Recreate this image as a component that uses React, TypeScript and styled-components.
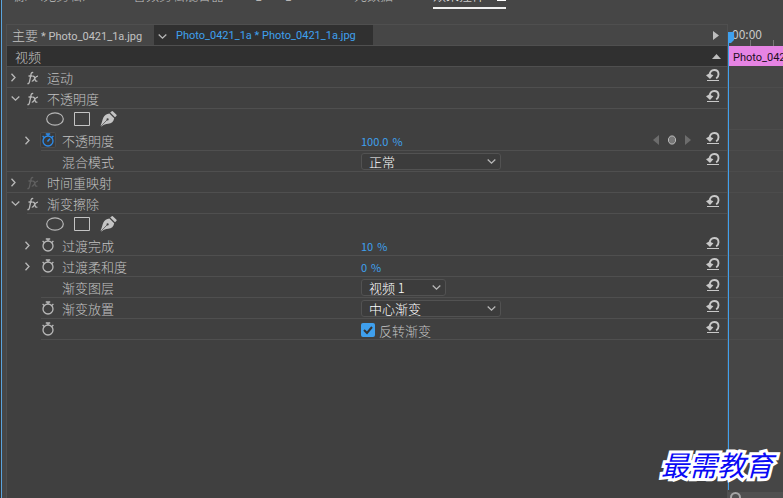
import React from "react";
import styled, { createGlobalStyle, css } from "styled-components";

const c = {
  frame: "#464646",
  panel: "#404040",
  dark: "#303030",
  line: "#4f4f4f",
  text: "#c2c2c2",
  icon: "#b8b8b8",
  blue: "#3fa0ee",
};

const GlobalStyle = createGlobalStyle`
  * { box-sizing: border-box; }
  body {
    margin: 0;
    background: ${c.frame};
    color: ${c.text};
    font: 300 13px/20px "Noto Sans CJK SC", sans-serif;
    overflow: hidden;
  }
  button, select, input { font: inherit; color: inherit; margin: 0; }
  svg { flex: none; }
`;

const Window = styled.div`
  position: relative;
  min-height: 100vh;
  display: flex;
  flex-direction: column;
  padding-left: 6px;
  background: linear-gradient(90deg, #333 1px, #5ba4dd 1px, #5ba4dd 2px, ${c.frame} 2px);
`;

const bareButton = css`
  display: flex;
  align-items: center;
  padding: 0;
  border: 0;
  background: none;
`;

const PanelTabs = styled.div`
  height: 24px;
  display: flex;
  align-items: flex-start;
  overflow: hidden;
  padding-left: 8px;
`;

const PanelTab = styled.button<{ $width: number; $active?: boolean }>`
  ${bareButton}
  flex: 0 0 ${(p) => p.$width}px;
  height: 24px;
  margin-top: -15px;
  align-items: baseline;
  line-height: 20px;
  white-space: nowrap;
  color: ${(p) => (p.$active ? "#fff" : c.text)};
`;

const ActiveTab = styled(PanelTab)`
  align-items: flex-start;
  justify-content: space-between;
  border-bottom: 2px solid #f0f0f0;
`;

const Latin = styled.span`
  font-family: Roboto, "Noto Sans CJK SC", sans-serif;
  font-size: 11px;
  font-weight: 400;
`;

const Main = styled.div`
  flex: 1;
  display: flex;
`;

const Controls = styled.section`
  flex: 1;
  min-width: 0;
  background: ${c.panel};
  border: solid ${c.line};
  border-width: 1px 1px 0;
`;

const ClipBar = styled.div`
  height: 21px;
  display: flex;
  background: ${c.frame};
  border-bottom: 1px solid ${c.line};
  white-space: nowrap;
`;

const SourceClip = styled.button`
  ${bareButton}
  align-items: baseline;
  width: 147px;
  gap: 3px;
  padding-left: 5px;
`;

const SequenceClip = styled.button`
  ${bareButton}
  width: 219px;
  gap: 9px;
  padding: 2px 0 0 4px;
  color: ${c.blue};
  background: ${c.dark};
`;

const PlayToggle = styled.button`
  ${bareButton}
  margin-left: auto;
  padding-right: 8px;
`;

const SectionBar = styled.div`
  height: 21px;
  display: flex;
  align-items: center;
  justify-content: space-between;
  padding: 0 6px 0 8px;
  background: ${c.dark};
  border-bottom: 1px solid ${c.line};
`;

const Row = styled.div<{ $indent: number; $line?: boolean }>`
  height: 21px;
  display: grid;
  grid-template-columns: ${(p) => 354 - p.$indent}px 1fr auto 21px;
  align-items: center;
  margin-left: ${(p) => p.$indent}px;
  border-bottom: 1px solid ${(p) => (p.$line === false ? "transparent" : c.line)};
`;

const Name = styled.div<{ $outdent: number }>`
  display: flex;
  align-items: center;
  margin-left: ${(p) => -p.$outdent}px;
`;

const Slot = styled.span<{ $width: number }>`
  display: flex;
  align-items: center;
  flex: 0 0 ${(p) => p.$width}px;
`;

const Label = styled.span`
  padding-top: 2px;
  line-height: 18px;
`;

const IconButton = styled.button`
  ${bareButton}
`;

const ResetButton = styled(IconButton)`
  align-self: start;
  padding-top: 2px;
`;

const WatchButton = styled.button<{ $on?: boolean }>`
  ${bareButton}
  width: 16px;
  height: 16px;
  justify-content: center;
  border-radius: 2px;
  color: ${(p) => (p.$on ? "#2d8ceb" : c.icon)};
  background: ${(p) => (p.$on ? "#393939" : "none")};
  box-shadow: ${(p) => (p.$on ? "0 0 0 1px #4b4b4b inset" : "none")};
`;

const AmountBox = styled.div`
  display: flex;
  align-items: center;
  gap: 4px;
  padding-top: 2px;
  font-size: 11px;
  font-weight: 400;
  line-height: 18px;
  color: ${c.blue};
`;

const NumberButton = styled.button`
  ${bareButton}
`;

const SelectBox = styled.span<{ $width: number }>`
  display: grid;
  align-items: center;
  width: ${(p) => p.$width}px;
  height: 17px;
  > * { grid-area: 1 / 1; }
  > svg { justify-self: end; margin-right: 5px; pointer-events: none; }
`;

const Select = styled.select`
  appearance: none;
  width: 100%;
  height: 17px;
  padding: 0 20px 0 7px;
  border: 1px solid #525252;
  border-radius: 3px;
  background: #3c3c3c;
  color: #fff;
  line-height: 15px;
`;

const CheckLabel = styled.label`
  display: flex;
  align-items: center;
  gap: 4px;
  padding-top: 2px;
  line-height: 17px;
`;

const CheckBox = styled.span`
  display: grid;
  > * { grid-area: 1 / 1; }
  > svg { pointer-events: none; }
  > input:not(:checked) + svg { visibility: hidden; }
`;

const CheckInput = styled.input`
  appearance: none;
  width: 14px;
  height: 14px;
  border-radius: 2px;
  background: #3a3a3a;
  &:checked { background: ${c.blue}; }
`;

const KeyNav = styled.div`
  display: flex;
  align-items: center;
  gap: 9px;
  margin-right: 15px;
  color: #6c6c6c;
`;

const Shapes = styled.div`
  display: flex;
  align-items: center;
  gap: 10px;
  padding-left: 39px;
`;

const Timeline = styled.section`
  position: relative;
  flex: 0 0 55px;
  padding-left: 1px;
  overflow: hidden;
`;

const PlayheadLine = styled.div`
  position: absolute;
  left: 0;
  top: 18px;
  bottom: 8px;
  width: 1px;
  background: ${c.blue};
`;

const Ruler = styled.div`
  height: 22px;
  padding-left: 3px;
  font-size: 12px;
  font-weight: 400;
  line-height: 19px;
  color: #c8c8c8;
  background:
    linear-gradient(#777, #777) 21px 16px / 1px 6px no-repeat,
    linear-gradient(#777, #777) 44px 16px / 1px 6px no-repeat;
`;

const Clip = styled.div`
  height: 20px;
  margin-bottom: 1px;
  padding-left: 4px;
  background: #e684e4;
  color: #1d101d;
  line-height: 20px;
  white-space: nowrap;
`;

const Lane = styled.div<{ $line: boolean }>`
  height: 21px;
  border-bottom: 1px solid ${(p) => (p.$line ? "#4c4c4c" : "transparent")};
`;

const Playhead = styled.svg`
  position: absolute;
  left: 0;
  top: 8px;
`;

const ZoomBar = styled.div`
  position: absolute;
  left: 0;
  right: 0;
  bottom: 0;
  height: 6px;
  overflow: hidden;
  background: #505050;
`;

const ZoomHandle = styled.div`
  width: 11px;
  height: 11px;
  margin-left: 2px;
  border: 2px solid #a5a5a5;
  border-radius: 50%;
`;

const Watermark = styled.div`
  position: absolute;
  right: 10px;
  bottom: 14px;
  font-size: 28px;
  font-weight: 400;
  font-style: italic;
  line-height: 40px;
  color: #0a0af5;
  -webkit-text-stroke: 6px #fff;
  paint-order: stroke fill;
  stroke-linejoin: round;
`;

const Chevron = ({ down }: { down?: boolean }) => (
  <svg width="9" height="9" viewBox="0 0 9 9" fill="none" stroke={c.icon} strokeWidth="1.3">
    <path d={down ? "M.7 2.5 4.5 6.2 8.3 2.5" : "M2.5.7 6 4.5 2.5 8.3"} />
  </svg>
);

const Fx = ({ dim }: { dim?: boolean }) => (
  <svg width="12" height="15" viewBox="0 0 12 15" fill="none" stroke={dim ? "#606060" : c.icon} strokeWidth="1.3">
    <path d="M.4 13.5c1.3.3 1.8-.4 2.1-1.8L4 4.400c.3-1.500.9-2.200 2.200-1.800M1.500 6h4" />
    <path d="M5.600 6.500c1.300-.7 1.800.2 2.100 1.700.5 2.500 1 3.500 2.700 2.800M11 6.200C9.300 6 8.300 7.700 7.500 8.900 6.700 10.300 6 11.500 4.800 11.100" />
  </svg>
);

const Stopwatch = ({ on }: { on?: boolean }) => (
  <svg width="14" height="14" viewBox="0 0 14 14" fill="none" stroke="currentColor" strokeWidth="1.3">
    <circle cx="7" cy="8" r="5" />
    <path d="M4.800 1h4.400M7 1v2M1.600 3l1.600 1.400M12.400 3l-1.600 1.400" />
    {on && <path d="M6.500 8.500 9 5.800" strokeWidth="1.600" />}
  </svg>
);

const ResetIcon = () => (
  <svg width="14" height="12" viewBox="0 0 14 12" fill="none" stroke="#c8c8c8">
    <path d="M3.800 6.300C3.500 3.200 5.600 1 8.200 1c2.700 0 4.300 1.900 4.300 4.200 0 1.900-.8 3.300-2.300 4.300" strokeWidth="1.900" />
    <path d="M0 6.200 3.200 4.600 7.400 6.200 4 10Z" fill="#c8c8c8" stroke="none" />
    <path d="M1 11.500h12" />
  </svg>
);

const Ellipse = () => (
  <svg width="18" height="14" viewBox="0 0 18 14" fill="none" stroke={c.icon} strokeWidth="1.200">
    <ellipse cx="9" cy="7" rx="8.300" ry="6.200" />
  </svg>
);

const Rectangle = () => (
  <svg width="16" height="14" viewBox="0 0 16 14" fill="none" stroke="#c4c4c4">
    <path d="M.5.5h15v13H.5Z" />
  </svg>
);

const Pen = () => (
  <svg width="17" height="16" viewBox="0 0 17 16">
    <path fill="#c4c4c4" d="M10.200 1.600 11.800.2q.5-.4 1 0l3.700 3.500q.4.5 0 1L15 6.200ZM9.400 2.600l4.800 4.600c-.6 3.300-2.600 5.200-6 5.600-2.600.3-4.600 1-6.600 2.700L.6 14.600C2 12 2.200 9.400 3.400 6.600 4.500 4.300 6.700 3 9.400 2.600Z" />
    <circle cx="7.600" cy="8.400" r="1.100" fill={c.panel} />
    <path d="m1.100 15 5.900-6" stroke={c.panel} strokeWidth=".7" />
  </svg>
);

const KeyArrow = ({ next }: { next?: boolean }) => (
  <svg width="6" height="10" viewBox="0 0 6 10" fill="currentColor">
    <path d={next ? "M0 0v10l6-5Z" : "M6 0v10L0 5Z"} />
  </svg>
);

const MenuIcon = () => (
  <svg width="9" height="20" viewBox="0 0 9 20" stroke="currentColor">
    <path d="M0 9.500h9M0 12.500h9M0 15.500h9" />
  </svg>
);

const Reset = ({ name }: { name: string }) => (
  <ResetButton aria-label={`重置${name}`}><ResetIcon /></ResetButton>
);

const Dropdown = ({ name, width, options }: { name: string; width: number; options: string[] }) => (
  <SelectBox $width={width}>
    <Select aria-label={name}>{options.map((o) => <option key={o}>{o}</option>)}</Select>
    <Chevron down />
  </SelectBox>
);

const Effect = ({ name, open, dim, reset = true }: { name: string; open?: boolean; dim?: boolean; reset?: boolean }) => (
  <Row $indent={open ? 20 : 0}>
    <Name $outdent={open ? 20 : 0}>
      <Slot $width={20}>
        <Slot $width={open ? 4 : 2} />
        <IconButton aria-label={`展开${name}`}><Chevron down={open} /></IconButton>
      </Slot>
      <Slot $width={20}><IconButton aria-label={`启用${name}`}><Fx dim={dim} /></IconButton></Slot>
      <Label>{name}</Label>
    </Name>
    <span /><span />
    {reset && <Reset name={name} />}
  </Row>
);

const Masks = () => (
  <Row $indent={0} $line={false}>
    <Shapes>
      <IconButton aria-label="椭圆形蒙版"><Ellipse /></IconButton>
      <IconButton aria-label="矩形蒙版"><Rectangle /></IconButton>
      <IconButton aria-label="钢笔"><Pen /></IconButton>
    </Shapes>
  </Row>
);

type PropertyProps = {
  name: string;
  expandable?: boolean;
  watch?: "on" | "off";
  full?: boolean;
  hideName?: boolean;
  nav?: boolean;
  children: React.ReactNode;
};

const Property = ({ name, expandable, watch, full, hideName, nav, children }: PropertyProps) => (
  <Row $indent={full ? 0 : 34}>
    <Name $outdent={full ? 0 : 34}>
      <Slot $width={16} />
      <Slot $width={17}>
        {expandable && <IconButton aria-label={`展开${name}`}><Chevron /></IconButton>}
      </Slot>
      <Slot $width={22}>
        {watch && (
          <WatchButton $on={watch === "on"} aria-label={`切换动画${name}`}><Stopwatch on={watch === "on"} /></WatchButton>
        )}
      </Slot>
      {!hideName && <Label>{name}</Label>}
    </Name>
    <div>{children}</div>
    {nav ? (
      <KeyNav>
        <IconButton aria-label="上一关键帧"><KeyArrow /></IconButton>
        <IconButton aria-label="添加关键帧">
          <svg width="8" height="10" viewBox="0 0 8 10" fill="#777" stroke="#b8b8b8">
            <path d="M2.500 1h3L7.500 3.500v3L5.500 9h-3L.5 6.500v-3Z" />
          </svg>
        </IconButton>
        <IconButton aria-label="下一关键帧"><KeyArrow next /></IconButton>
      </KeyNav>
    ) : <span />}
    <Reset name={name} />
  </Row>
);

const Amount = ({ name, value }: { name: string; value: string }) => (
  <AmountBox>
    <NumberButton aria-label={`${name} ${value}`}>{value}</NumberButton>
    <span>%</span>
  </AmountBox>
);

const Check = ({ text }: { text: string }) => (
  <CheckLabel>
    <CheckBox>
      <CheckInput type="checkbox" defaultChecked />
      <svg width="14" height="14" viewBox="0 0 14 14" fill="none" stroke="#343434" strokeWidth="2">
        <path d="m3 7 3 3 5-6" />
      </svg>
    </CheckBox>
    {text}
  </CheckLabel>
);

const lanes = [true, false, true, true, true, true, false, false, true, true, true, true, true];

export default function App() {
  return (
    <Window>
      <GlobalStyle />
      <PanelTabs>
        <PanelTab $width={119}>源:（无剪辑）</PanelTab>
        <PanelTab $width={221}>音频剪辑混合器:<Latin>Photo_0421_1a</Latin></PanelTab>
        <PanelTab $width={79}>元数据</PanelTab>
        <ActiveTab $width={73} $active>效果控件<MenuIcon /></ActiveTab>
      </PanelTabs>
      <Main>
        <Controls>
          <ClipBar>
            <SourceClip>主要<Latin>* Photo_0421_1a.jpg</Latin></SourceClip>
            <SequenceClip><Chevron down /><Latin>Photo_0421_1a * Photo_0421_1a.jpg</Latin></SequenceClip>
            <PlayToggle aria-label="显示时间轴">
              <svg width="6" height="9" viewBox="0 0 6 9" fill="#bdbdbd"><path d="M0 0v9l6-4.500Z" /></svg>
            </PlayToggle>
          </ClipBar>
          <SectionBar>
            <Label>视频</Label>
            <IconButton aria-label="折叠视频">
              <svg width="9" height="5" viewBox="0 0 9 5" fill="#bdbdbd"><path d="M0 5h9L4.500 0Z" /></svg>
            </IconButton>
          </SectionBar>
          <Effect name="运动" />
          <Effect name="不透明度" open />
          <Masks />
          <Property name="不透明度" expandable watch="on" nav><Amount name="不透明度" value="100.0" /></Property>
          <Property name="混合模式" full><Dropdown name="混合模式" width={140} options={["正常", "溶解"]} /></Property>
          <Effect name="时间重映射" dim reset={false} />
          <Effect name="渐变擦除" open />
          <Masks />
          <Property name="过渡完成" expandable watch="off"><Amount name="过渡完成" value="10" /></Property>
          <Property name="过渡柔和度" expandable watch="off"><Amount name="过渡柔和度" value="0" /></Property>
          <Property name="渐变图层"><Dropdown name="渐变图层" width={85} options={["视频 1", "视频 2"]} /></Property>
          <Property name="渐变放置" watch="off"><Dropdown name="渐变放置" width={140} options={["中心渐变", "平铺渐变"]} /></Property>
          <Property name="反转渐变" watch="off" hideName><Check text="反转渐变" /></Property>
        </Controls>
        <Timeline>
          <Ruler>00:00</Ruler>
          <Clip><Latin>Photo_0421_1a.jpg</Latin></Clip>
          {lanes.map((line, i) => <Lane key={i} $line={line} />)}
          <PlayheadLine />
          <Playhead width="6" height="12" viewBox="0 0 6 12"><path fill={c.blue} d="M0 0h6v8l-3 3H0Z" /></Playhead>
          <ZoomBar><ZoomHandle /></ZoomBar>
        </Timeline>
      </Main>
      <Watermark>最需教育</Watermark>
    </Window>
  );
}
